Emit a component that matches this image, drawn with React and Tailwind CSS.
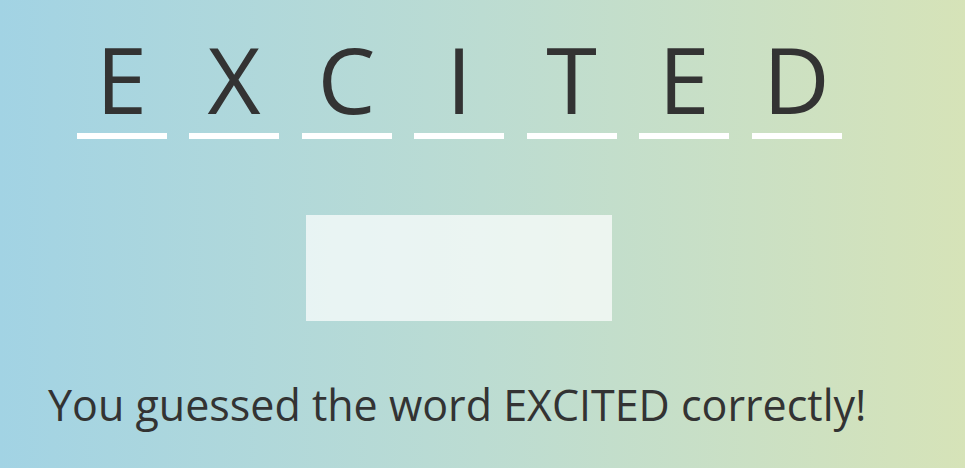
const WORD = 'EXCITED';

// Una casilla por letra: la letra arriba, la raya blanca abajo.
function LetterSlot({ letter }) {
  return (
    <div className="flex w-[90px] flex-col items-center">
      <span className="h-[84px] text-[92px] leading-[84px] text-[#333333]">{letter}</span>
      <span className="mt-[12px] h-[6px] w-full bg-white" />
    </div>
  );
}

export default function App() {
  return (
    <div
      className="h-[468px] w-full overflow-hidden bg-gradient-to-r from-[#a2d3e4] via-[#bcdcd2] to-[#d6e3b8] text-[#333333]"
      style={{ fontFamily: '"Open Sans", "Noto Sans", sans-serif' }}
    >
      <div className="ml-[48px] flex w-[822px] flex-col items-center">
        <div className="mt-[37px] flex gap-[22.5px]">
          {WORD.split('').map((l, i) => (
            <LetterSlot key={i} letter={l} />
          ))}
        </div>
        {/* Campo de entrada (vacío una vez adivinada la palabra) */}
        <div className="mt-[76px] h-[106px] w-[306px] bg-white/70" />
        <p className="mt-[62px] self-start whitespace-nowrap text-[43px] leading-none">
          You guessed the word EXCITED correctly!
        </p>
      </div>
    </div>
  );
}
